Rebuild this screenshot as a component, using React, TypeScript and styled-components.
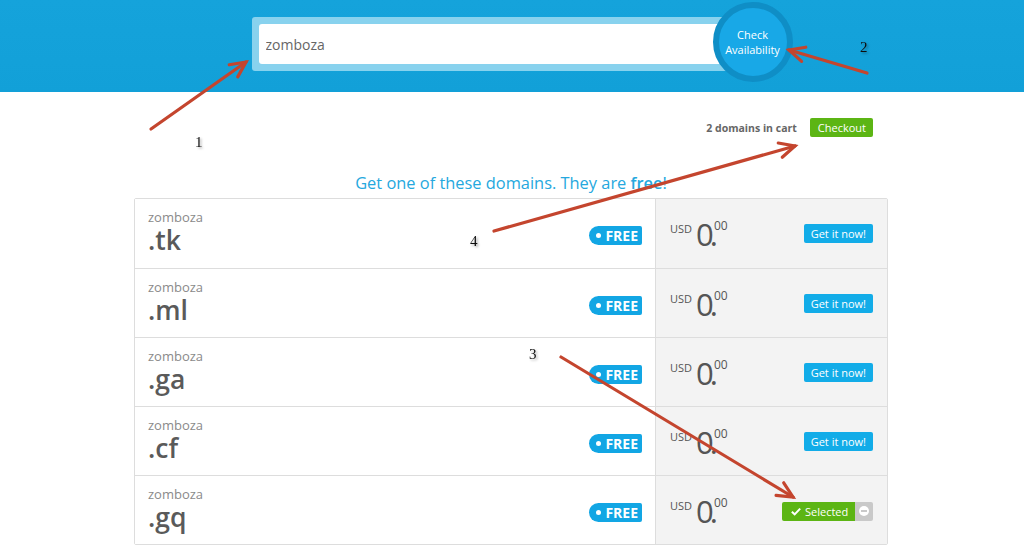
import { createGlobalStyle } from "styled-components";
import styled from "styled-components";

const GlobalStyle = createGlobalStyle`
  html, body {
    margin: 0;
    padding: 0;
    background: #fff;
    font-family: "Open Sans", "Liberation Sans", Arial, sans-serif;
  }
  #root {
    position: relative;
    width: 1024px;
    height: 557px;
    overflow: hidden;
  }
`;

const domains = [
  { tld: ".tk", selected: false },
  { tld: ".ml", selected: false },
  { tld: ".ga", selected: false },
  { tld: ".cf", selected: false },
  { tld: ".gq", selected: true },
];

type Arrow = { x1: number; y1: number; x2: number; y2: number };

const arrows: Arrow[] = [
  { x1: 151, y1: 129, x2: 246, y2: 62 },
  { x1: 867, y1: 73, x2: 789, y2: 50 },
  { x1: 561, y1: 357, x2: 793, y2: 497 },
  { x1: 494, y1: 231, x2: 795, y2: 146 },
];

const labels = [
  { n: "1", x: 195, y: 147 },
  { n: "2", x: 860, y: 52 },
  { n: "3", x: 529, y: 359 },
  { n: "4", x: 470, y: 246 },
];

function headPath(a: Arrow) {
  const dx = a.x2 - a.x1;
  const dy = a.y2 - a.y1;
  const len = Math.hypot(dx, dy);
  const ux = dx / len;
  const uy = dy / len;
  const size = 17;
  const ang = 0.45;
  const pts = [ang, -ang].map((t) => {
    const rx = ux * Math.cos(t) - uy * Math.sin(t);
    const ry = ux * Math.sin(t) + uy * Math.cos(t);
    return [a.x2 - rx * size, a.y2 - ry * size];
  });
  return `M${pts[0][0]} ${pts[0][1]} L${a.x2} ${a.y2} L${pts[1][0]} ${pts[1][1]}`;
}

export default function App() {
  return (
    <>
      <GlobalStyle />
      <Header>
        <SearchGroup>
          <SearchFrame>
            <SearchInput defaultValue="zomboza" />
          </SearchFrame>
          <CheckButton>
            Check
            <br />
            Availability
          </CheckButton>
        </SearchGroup>
      </Header>

      <Main>
        <CartRow>
          <CartText>2 domains in cart</CartText>
          <CheckoutButton>Checkout</CheckoutButton>
        </CartRow>

        <Heading>
          Get one of these domains. They are <b>free</b>!
        </Heading>

        <Table>
          {domains.map((d) => (
            <Row key={d.tld}>
              <NameCell>
                <NameBlock>
                  <Sld>zomboza</Sld>
                  <Tld>{d.tld}</Tld>
                </NameBlock>
                <FreeBadge>
                  <Dot />
                  FREE
                </FreeBadge>
              </NameCell>
              <PriceCell>
                <Price>
                  <Currency>USD</Currency>
                  <Amount>0.</Amount>
                  <Cents>00</Cents>
                </Price>
                {d.selected ? (
                  <SelectedGroup>
                    <SelectedButton>
                      <Check viewBox="0 0 12 10">
                        <path d="M1 5.2 L4.4 8.4 L11 1.6" />
                      </Check>
                      Selected
                    </SelectedButton>
                    <RemoveButton>
                      <MinusDot />
                    </RemoveButton>
                  </SelectedGroup>
                ) : (
                  <GetButton>Get it now!</GetButton>
                )}
              </PriceCell>
            </Row>
          ))}
        </Table>
      </Main>

      <Overlay viewBox="0 0 1024 557">
        <defs>
          <filter id="sh" x="-50%" y="-50%" width="200%" height="200%">
            <feDropShadow dx="1.5" dy="1.5" stdDeviation="1" floodColor="#000" floodOpacity="0.35" />
          </filter>
        </defs>
        {arrows.map((a, i) => (
          <g key={i} stroke="#c4452e" strokeWidth={3.2} strokeLinecap="round" fill="none">
            <line x1={a.x1} y1={a.y1} x2={a.x2} y2={a.y2} />
            <path d={headPath(a)} strokeLinejoin="miter" />
          </g>
        ))}
        {labels.map((l) => (
          <NumberText key={l.n} x={l.x} y={l.y} filter="url(#sh)">
            {l.n}
          </NumberText>
        ))}
      </Overlay>
    </>
  );
}

const Header = styled.header`
  height: 92px;
  background: linear-gradient(#15a3db, #12a0d8);
  display: flex;
  justify-content: center;
`;

const SearchGroup = styled.div`
  display: flex;
  align-items: center;
  margin-left: 20px;
  height: 84px;
`;

const SearchFrame = styled.div`
  width: 480px;
  height: 54px;
  margin-top: 4px;
  box-sizing: border-box;
  padding: 7px;
  background: #88d2ee;
  border-radius: 3px;
`;

const SearchInput = styled.input`
  width: 100%;
  height: 40px;
  box-sizing: border-box;
  border: none;
  border-radius: 3px;
  padding: 0 0 0 7px;
  font-family: "Open Sans", "Liberation Sans", sans-serif;
  font-size: 14px;
  color: #666;
  background: #fff;
  outline: none;
`;

const CheckButton = styled.div`
  width: 68px;
  height: 68px;
  margin-left: -19px;
  border-radius: 50%;
  background: #18a8e7;
  border: 6px solid #0f8ec6;
  display: flex;
  align-items: center;
  justify-content: center;
  text-align: center;
  color: #fff;
  font-size: 11px;
  line-height: 15px;
  flex-shrink: 0;
`;

const Main = styled.main`
  width: 756px;
  box-sizing: border-box;
  padding-right: 2px;
  margin: 0 auto;
`;

const CartRow = styled.div`
  display: flex;
  justify-content: flex-end;
  align-items: center;
  gap: 13px;
  margin-top: 26px;
  padding-right: 15px;
`;

const CartText = styled.span`
  font-size: 10.5px;
  font-weight: 700;
  color: #666;
`;

const CheckoutButton = styled.span`
  background: #5cb514;
  color: #fff;
  font-size: 11px;
  height: 19px;
  line-height: 19px;
  padding: 0 7px 0 8px;
  border-radius: 2px;
`;

const Heading = styled.h2`
  margin: 36px 0 5px;
  text-align: center;
  font-weight: 400;
  font-size: 16.4px;
  line-height: 20px;
  color: #25a8de;

  b {
    font-weight: 600;
  }
`;

const Table = styled.div`
  border: 1px solid #ddd;
  border-radius: 2px;
`;

const Row = styled.div`
  display: grid;
  grid-template-columns: 521px 1fr;
  height: 69px;
  box-sizing: border-box;
  & + & {
    border-top: 1px solid #ddd;
  }
`;

const NameCell = styled.div`
  display: flex;
  align-items: center;
  justify-content: space-between;
  padding: 0 13px 0 13px;
  border-right: 1px solid #ddd;
  background: #fff;
`;

const NameBlock = styled.div`
  display: flex;
  flex-direction: column;
  margin-top: -4px;
`;

const Sld = styled.span`
  font-size: 13px;
  line-height: 17px;
  color: #8a8a8a;
`;

const Tld = styled.span`
  font-size: 26.5px;
  line-height: 28px;
  font-weight: 600;
  color: #5a5a5a;
`;

const FreeBadge = styled.span`
  display: flex;
  align-items: center;
  gap: 4px;
  margin-top: 4px;
  height: 19px;
  padding: 0 4px 0 7px;
  background: #12a6e4;
  color: #fff;
  font-size: 14px;
  font-weight: 700;
  border-radius: 10px 2px 2px 10px;
`;

const Dot = styled.span`
  width: 5px;
  height: 5px;
  border-radius: 50%;
  background: #fff;
`;

const PriceCell = styled.div`
  display: flex;
  align-items: center;
  justify-content: space-between;
  padding: 0 14px 0 14px;
  background: #f3f3f3;
`;

const Price = styled.div`
  display: flex;
  align-items: flex-start;
  color: #555;
  margin-top: 1px;
`;

const Currency = styled.span`
  font-size: 11px;
  line-height: 14px;
  margin-top: 2px;
  margin-right: 4px;
`;

const Amount = styled.span`
  font-size: 31px;
  line-height: 28px;
  font-weight: 400;
  letter-spacing: -4px;
`;

const Cents = styled.span`
  font-size: 12px;
  line-height: 12px;
`;

const GetButton = styled.span`
  background: #12ace8;
  color: #fff;
  font-size: 11px;
  height: 19px;
  line-height: 19px;
  padding: 0 7px;
  border-radius: 2px;
`;

const SelectedGroup = styled.div`
  display: flex;
  height: 19px;
  margin-top: 2px;
`;

const SelectedButton = styled.span`
  display: flex;
  align-items: center;
  gap: 4px;
  width: 73px;
  box-sizing: border-box;
  padding-left: 9px;
  background: #5cb514;
  color: #fff;
  font-size: 11px;
  border-radius: 2px 0 0 2px;
`;

const Check = styled.svg`
  width: 10px;
  height: 9px;
  fill: none;
  stroke: #fff;
  stroke-width: 2.4;
`;

const RemoveButton = styled.span`
  width: 18px;
  display: flex;
  align-items: center;
  justify-content: center;
  background: #c9c9c9;
  border-radius: 0 2px 2px 0;
`;

const MinusDot = styled.span`
  position: relative;
  width: 10px;
  height: 10px;
  border-radius: 50%;
  background: #fff;

  &::after {
    content: "";
    position: absolute;
    left: 2px;
    right: 2px;
    top: 4px;
    height: 2px;
    background: #c9c9c9;
  }
`;

const Overlay = styled.svg`
  position: absolute;
  left: 0;
  top: 0;
  width: 1024px;
  height: 557px;
  pointer-events: none;
`;

const NumberText = styled.text`
  font-family: "Liberation Serif", "Times New Roman", serif;
  font-size: 15px;
  fill: #111;
`;
